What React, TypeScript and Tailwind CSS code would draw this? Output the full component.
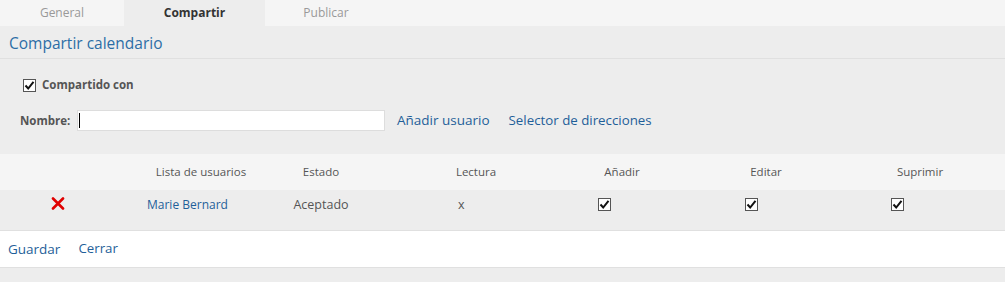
import React from "react";

const Check = () => (
  <div className="w-[13px] h-[13px] border border-[#555] bg-white flex items-center justify-center">
    <svg width="11" height="11" viewBox="0 0 11 11">
      <path d="M1.5 5.5 L4.2 8.5 L9.5 1.8" fill="none" stroke="#111" strokeWidth="2" />
    </svg>
  </div>
);

const RedX = () => (
  <svg width="14" height="13" viewBox="0 0 14 13">
    <path d="M2 1.5 L12 11.5 M12 1.5 L2 11.5" stroke="#e00000" strokeWidth="2.6" strokeLinecap="round" />
  </svg>
);

export default function App() {
  const font = { fontFamily: '"Open Sans", "Noto Sans", sans-serif' };
  return (
    <div className="w-[1005px] h-[282px] bg-[#ededed] overflow-hidden" style={font}>
      {/* tabs */}
      <div className="flex h-[26px] bg-[#f5f5f5] text-[12px]">
        <div className="w-[124px] flex items-center justify-center text-[#999]">General</div>
        <div className="w-[141px] flex items-center justify-center bg-[#ededed] text-[#333] font-bold">Compartir</div>
        <div className="w-[122px] flex items-center justify-center text-[#999]">Publicar</div>
      </div>
      {/* title */}
      <div className="h-[33px] border-b border-[#e0e0e0] flex items-center pl-[9px] pt-[3px] text-[15.5px] text-[#2c6da6]">
        Compartir calendario
      </div>
      {/* shared with */}
      <div className="flex items-center h-[36px] pt-[16px] pl-[23px]">
        <Check />
        <span className="ml-[6px] text-[11.5px] font-bold text-[#555]">Compartido con</span>
      </div>
      <div className="flex items-center mt-[15px] h-[21px]">
        <span className="ml-[20px] w-[57px] text-[11.5px] font-bold text-[#555]">Nombre:</span>
        <div className="w-[308px] h-[21px] bg-white border border-[#ddd] flex items-center pl-[1px]">
          <div className="w-px h-[15px] bg-black" />
        </div>
        <span className="ml-[12px] text-[13.5px] text-[#1f5f99]">Añadir usuario</span>
        <span className="ml-[19px] text-[13.3px] text-[#1f5f99]">Selector de direcciones</span>
      </div>
      {/* table */}
      <div className="mt-[23px]">
        <div className="flex h-[36px] bg-[#f5f5f5] items-center text-[11.5px] text-[#555]">
          <div className="w-[116px]" />
          <div className="w-[170px] text-center">Lista de usuarios</div>
          <div className="w-[70px] text-center">Estado</div>
          <div className="w-[240px] text-center">Lectura</div>
          <div className="w-[52px] text-center">Añadir</div>
          <div className="w-[236px] text-center">Editar</div>
          <div className="w-[72px] text-center">Suprimir</div>
        </div>
        <div className="flex h-[40px] items-start pt-[7px] text-[12.5px]">
          <div className="w-[116px] flex justify-center pt-[0px]"><RedX /></div>
          <div className="w-[170px] pl-[31px] text-[12px] text-[#1f5f99] leading-[15px]">Marie Bernard</div>
          <div className="w-[70px] text-center text-[#555] leading-[15px]">Aceptado</div>
          <div className="w-[240px] pl-[102px] text-[#555] leading-[15px]">x</div>
          <div className="w-[52px] pl-[2px] pt-[1px]"><Check /></div>
          <div className="w-[236px] pl-[97px] pt-[1px]"><Check /></div>
          <div className="w-[72px] pl-[7px] pt-[1px]"><Check /></div>
        </div>
        <div className="h-[38px] bg-white border-t border-b border-[#e0e0e0] flex items-center text-[13.5px] text-[#1f5f99]">
          <span className="ml-[8px]">Guardar</span>
          <span className="ml-[18px] text-[13.3px]">Cerrar</span>
        </div>
      </div>
    </div>
  );
}
